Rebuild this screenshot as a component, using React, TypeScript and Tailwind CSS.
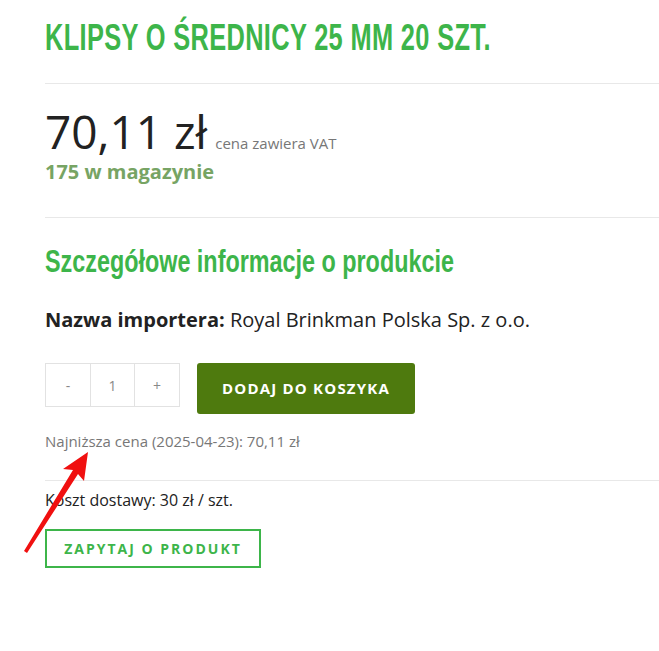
export default function App() {
  return (
    <div className="relative min-h-[651px] w-[659px] overflow-hidden bg-white font-['Open_Sans',sans-serif] text-[#222]">
      <div className="pl-[45px] pt-[18px]">
        <h1 className="origin-left scale-x-[0.705] whitespace-nowrap font-['Liberation_Sans',sans-serif] text-[36px] font-bold leading-[40px] tracking-[0.5px] text-[#3db54a]">
          KLIPSY O ŚREDNICY 25 MM 20 SZT.
        </h1>
        <div className="mt-[25px] h-px bg-[#e8e8e8]" />

        <div className="mt-[24px] flex items-baseline gap-[8px]">
          <span className="text-[46px] leading-[46px] text-[#222]">70,11 zł</span>
          <span className="text-[15px] leading-[20px] text-[#777]">cena zawiera VAT</span>
        </div>
        <div className="mt-[4px] text-[20px] font-bold leading-[28px] text-[#77a464]">175 w magazynie</div>
        <div className="mt-[31px] h-px bg-[#e8e8e8]" />

        <h2 className="mt-[23px] origin-left scale-x-[0.73] whitespace-nowrap font-['Liberation_Sans',sans-serif] text-[32px] font-bold leading-[40px] text-[#3db54a]">
          Szczegółowe informacje o produkcie
        </h2>

        <p className="mt-[24px] text-[20px] leading-[30px]">
          <strong className="font-bold">Nazwa importera:</strong> Royal Brinkman Polska Sp. z o.o.
        </p>

        <div className="mt-[28px] flex items-start gap-[17px]">
          <div className="flex h-[44px] border border-[#e2e2e2] text-[14px] text-[#888]">
            <div className="flex w-[45px] items-center justify-center border-r border-[#e2e2e2]">-</div>
            <div className="flex w-[44px] items-center justify-center border-r border-[#e2e2e2]">1</div>
            <div className="flex w-[44px] items-center justify-center">+</div>
          </div>
          <button className="flex h-[51px] w-[218px] items-center justify-center rounded-[3px] bg-[#4e7a0e] text-[15px] font-bold tracking-[1.2px] text-white">
            DODAJ DO KOSZYKA
          </button>
        </div>

        <p className="mt-[16px] text-[15px] leading-[22px] text-[#777]">Najniższa cena (2025-04-23): 70,11 zł</p>
        <div className="mt-[28px] h-px bg-[#e8e8e8]" />

        <p className="mt-[7px] text-[16px] leading-[24px] text-[#222]">Koszt dostawy: 30 zł / szt.</p>

        <button className="mt-[17px] flex h-[39px] w-[216px] items-center justify-center border-2 border-[#3db54a] text-[14px] font-bold tracking-[2px] text-[#3db54a]">
          ZAPYTAJ O PRODUKT
        </button>
      </div>

      <svg className="absolute left-0 top-0" width="659" height="651" viewBox="0 0 659 651">
        <path d="M24 551 L73 470 L63 469 L88 452 L84 481 L78 474 L27 553 Z" fill="#f01010" />
      </svg>
    </div>
  );
}
